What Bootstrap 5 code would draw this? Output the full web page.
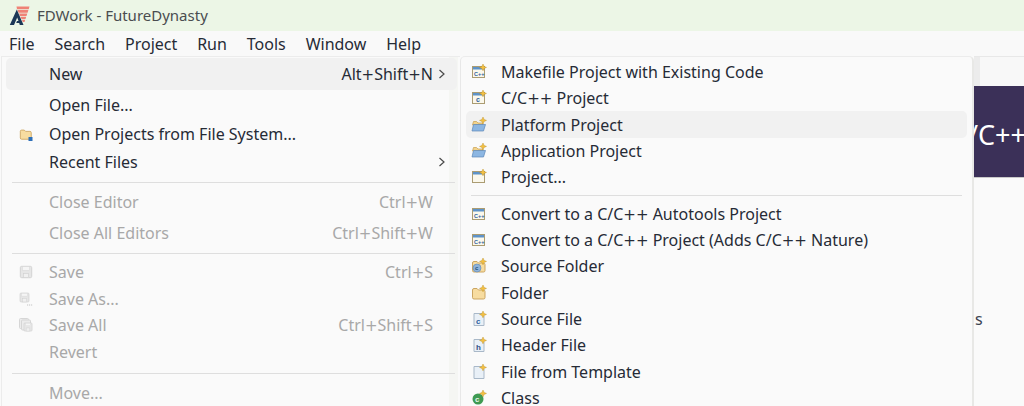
<!DOCTYPE html>
<html lang="en"><head><meta charset="utf-8"><title>FDWork</title>
<link href="https://cdn.jsdelivr.net/npm/bootstrap@5.3.0/dist/css/bootstrap.min.css" rel="stylesheet">
<style>
html,body{width:1024px;height:406px;overflow:hidden;margin:0}
body{background:#fafafa;font-family:"Noto Sans","Open Sans",sans-serif;font-size:16px;color:#262b36}
.titlebar{height:31px;background:#ecf6e6;padding-left:9px;gap:7px;color:#4a4d50;font-size:15px}
.menubar{height:25px;background:#f9f9f9;padding-left:9px;gap:19.900px}
.workspace{height:350px;background:#fafafa}
.menu-a{width:459px;margin-left:1px;background:linear-gradient(to right,#fafafa 447px,#f5f6f3 447px,#f5f6f3 456px,#fafafa 456px);border-left:1px solid #ececec;border-top:1px solid #ececec;flex:none;padding:1px 0 0 4px}
.menu-b{width:514px;flex:none;background:#fafafa;border-left:1px solid #e8e8e8;border-top:1px solid #ececec;border-radius:5px 5px 0 0;padding:0 5px;border-right:2px solid #e8e8e6}
.rest{flex:1;background:#fafafa;min-width:0;overflow:hidden}
.tabstrip{height:30px;background:linear-gradient(to right,#ececec 6px,#f8f8f8 6px);border-top:1px solid #e8e8e8}
.banner{height:92px;background:#3b3058;color:#fff;font-size:27px;line-height:98px;white-space:nowrap;text-indent:-6px;border-bottom:1px solid #c9c9c9;overflow:hidden}
.tail-s{margin-top:131px;padding-left:1px;line-height:20px;color:#3a4250}
.mi{align-items:center;border-radius:5px;white-space:nowrap;flex:none}
.mi .lbl{flex:1}
.a .ic{width:43px;padding-left:13px;flex:none;display:flex}
.a .mi{padding-right:12px;width:451px}
.b .ic{width:35px;padding-left:5px;flex:none;display:flex}
.sc{padding-right:12px}
.sc.flush{padding-right:0}
.arrow{width:12px;flex:none;display:flex}
.pls{font-family:"DejaVu Sans",sans-serif;font-size:15px}
.on{background:#f1f1f1}
.off{color:#a8a8a8}
.sep{height:1px;background:#dedede;flex:none}
.a .sep{margin-left:6px;margin-right:5px}
.b .sep{margin-left:5px;margin-right:5px}
.h25{height:25px}.h26{height:26px}.h27{height:27px}.h28{height:28px}.h30{height:30px}.h32{height:32px}
.gp4{margin-top:4px}.gp5{margin-top:5px}.gp6{margin-top:6px}.gp8{margin-top:8px}
.gb4{margin-bottom:4px}.gb5{margin-bottom:5px}.gb6{margin-bottom:6px}
.first{margin-top:2px}
.tiny{font-family:"Liberation Sans",sans-serif;font-weight:700}
svg{display:block}
</style></head><body>
<svg width="0" height="0" class="position-absolute">
<defs>
<symbol id="win" viewBox="0 0 16 16"><rect x="1.500" y="2.500" width="12" height="11" fill="#fbf8ec" stroke="#ab9c72"/><rect x="2" y="3" width="11" height="2.500" fill="#5f93c8"/></symbol>
<symbol id="spark" viewBox="0 0 16 16"><path d="M12 0l1.100 2.400 2.400 1-2.400 1L12 6.800l-1.100-2.400-2.400-1 2.400-1z" fill="#f3c044" stroke="#b98a1e" stroke-width=".4"/></symbol>
<symbol id="folder" viewBox="0 0 16 16"><path d="M1.500 5q0-1.500 1.500-1.500h3l1.500 1.500h5q1.500 0 1.500 1.500v6q0 1.500-1.500 1.500H3q-1.500 0-1.500-1.500z" fill="#f7dca0" stroke="#cba561"/></symbol>
<symbol id="bfolder" viewBox="0 0 16 16"><path d="M1.500 8l1-3.500h3L7 6h5v2H1.500z" fill="#f3d38a" stroke="#c79d4e" stroke-width=".7"/><path d="M1 14l1.500-6.500h12L12.500 14z" fill="#8cb6e2" stroke="#5b86b8" stroke-width=".7"/></symbol>
<symbol id="save" viewBox="0 0 16 16"><rect x="1.500" y="1.500" width="13" height="13" rx="1.500" fill="#e6e6e6" stroke="#d0d0d0"/><rect x="4" y="2" width="8" height="4" fill="#f5f5f5" stroke="#d8d8d8" stroke-width=".6"/><rect x="5" y="9.500" width="6" height="5" fill="#f0f0f0" stroke="#cfcfcf" stroke-width=".7"/></symbol>
<symbol id="page" viewBox="0 0 16 16"><path d="M3 2.500h7.500l2.500 2.500v9.500H3z" fill="#e9f0f7" stroke="#a9b8c8"/></symbol>
<symbol id="chev" viewBox="0 0 12 12"><path d="M6.500 2l4.500 4-4.500 4" fill="none" stroke="#4a4a4a" stroke-width="1.200"/></symbol>
</defs></svg>

<div class="titlebar d-flex align-items-center">
<svg width="21" height="21" viewBox="0 0 21 21"><path d="M7.500 1.500H20.500L19.700 4.300H8zM8.500 5.100H19.400L18.600 7.700H9.500zM10 8.500H18.300L17.500 11H11zM11.500 11.800H17.200L16.500 14H12.500zM13 14.800H16.200L15.500 17H13.700z" fill="#ef8276"/><path d="M7.800 4.500L.8 20H5L8.200 12.500 9.500 16H8L7.200 18H10.200L10.800 20H14.500z" fill="#1c3756"/></svg>
<span>FDWork - FutureDynasty</span></div>
<div class="menubar d-flex align-items-center"><span>File</span><span>Search</span><span>Project</span><span>Run</span><span>Tools</span><span>Window</span><span>Help</span></div>

<div class="workspace d-flex">
<div class="menu-a a d-flex flex-column">
 <div class="mi on d-flex h32"><span class="ic"></span><span class="lbl">New</span><span class="sc flush">Alt<span class="pls">+</span>Shift<span class="pls">+</span>N</span><span class="arrow"><svg width="12" height="12"><use href="#chev"/></svg></span></div>
 <div class="mi d-flex h30"><span class="ic"></span><span class="lbl">Open File...</span></div>
 <div class="mi d-flex h28"><span class="ic"><svg width="14" height="14" viewBox="0 0 14 14"><use href="#folder" width="14" height="14"/><rect x="9.500" y="10" width="4" height="4" fill="#2d6fb8"/></svg></span><span class="lbl">Open Projects from File System...</span></div>
 <div class="mi d-flex h28"><span class="ic"></span><span class="lbl">Recent Files</span><span class="sc flush"></span><span class="arrow"><svg width="12" height="12"><use href="#chev"/></svg></span></div>
 <div class="sep gp6 gb4"></div>
 <div class="mi off d-flex h30"><span class="ic"></span><span class="lbl">Close Editor</span><span class="sc">Ctrl<span class="pls">+</span>W</span></div>
 <div class="mi off d-flex h32"><span class="ic"></span><span class="lbl">Close All Editors</span><span class="sc">Ctrl<span class="pls">+</span>Shift<span class="pls">+</span>W</span></div>
 <div class="sep gp4 gb4"></div>
 <div class="mi off d-flex h28"><span class="ic"><svg width="14" height="14"><use href="#save" width="14" height="14"/></svg></span><span class="lbl">Save</span><span class="sc">Ctrl<span class="pls">+</span>S</span></div>
 <div class="mi off d-flex h25"><span class="ic"><svg width="14" height="14" viewBox="0 0 14 14"><use href="#save" width="11" height="11"/><path d="M8 13h1.200M10 13h1.200M12 13h1.200" stroke="#c4c4c4"/></svg></span><span class="lbl">Save As...</span></div>
 <div class="mi off d-flex h28"><span class="ic"><svg width="14" height="14" viewBox="0 0 14 14"><rect x=".5" y=".5" width="9" height="10" rx="1" fill="#ececec" stroke="#d6d6d6"/><rect x="2.500" y="2" width="9" height="10" rx="1" fill="#ececec" stroke="#d6d6d6"/><use href="#save" x="4" y="4" width="10" height="10"/></svg></span><span class="lbl">Save All</span><span class="sc">Ctrl<span class="pls">+</span>Shift<span class="pls">+</span>S</span></div>
 <div class="mi off d-flex h26"><span class="ic"></span><span class="lbl">Revert</span></div>
 <div class="sep gp8 gb6"></div>
 <div class="mi off d-flex h26"><span class="ic"></span><span class="lbl">Move...</span></div>
</div>
<div class="menu-b b d-flex flex-column">
 <div class="mi d-flex h26 first"><span class="ic"><svg width="16" height="16"><use href="#win"/><text x="3" y="11.500" font-size="5.500" fill="#2f5f9e" class="tiny">C++</text><use href="#spark"/></svg></span><span class="lbl">Makefile Project with Existing Code</span></div>
 <div class="mi d-flex h26"><span class="ic"><svg width="16" height="16"><use href="#win"/><text x="5" y="12" font-size="7" fill="#2f5f9e" class="tiny">c</text><use href="#spark"/></svg></span><span class="lbl">C/C<span class="pls">+</span><span class="pls">+</span> Project</span></div>
 <div class="mi on d-flex h27"><span class="ic"><svg width="16" height="16"><use href="#bfolder"/><use href="#spark"/></svg></span><span class="lbl">Platform Project</span></div>
 <div class="mi d-flex h26"><span class="ic"><svg width="16" height="16"><use href="#bfolder"/><use href="#spark"/></svg></span><span class="lbl">Application Project</span></div>
 <div class="mi d-flex h26"><span class="ic"><svg width="16" height="16"><use href="#win"/><use href="#spark"/></svg></span><span class="lbl">Project...</span></div>
 <div class="sep gp5 gb5"></div>
 <div class="mi d-flex h26"><span class="ic"><svg width="16" height="16"><use href="#win"/><text x="3" y="11.500" font-size="5.500" fill="#2f5f9e" class="tiny">C++</text></svg></span><span class="lbl">Convert to a C/C<span class="pls">+</span><span class="pls">+</span> Autotools Project</span></div>
 <div class="mi d-flex h26"><span class="ic"><svg width="16" height="16"><use href="#win"/><text x="3" y="11.500" font-size="5.500" fill="#2f5f9e" class="tiny">C++</text></svg></span><span class="lbl">Convert to a C/C<span class="pls">+</span><span class="pls">+</span> Project (Adds C/C<span class="pls">+</span><span class="pls">+</span> Nature)</span></div>
 <div class="mi d-flex h26"><span class="ic"><svg width="16" height="16"><use href="#folder"/><circle cx="6" cy="10" r="4" fill="#8fb3d9" stroke="#5b86b8" stroke-width=".6"/><text x="4" y="12" font-size="6" fill="#23527f" class="tiny">c</text><use href="#spark"/></svg></span><span class="lbl">Source Folder</span></div>
 <div class="mi d-flex h27"><span class="ic"><svg width="16" height="16"><use href="#folder"/><use href="#spark"/></svg></span><span class="lbl">Folder</span></div>
 <div class="mi d-flex h26"><span class="ic"><svg width="16" height="16"><use href="#page"/><text x="5" y="12.500" font-size="8" fill="#2f5f9e" class="tiny">c</text><use href="#spark"/></svg></span><span class="lbl">Source File</span></div>
 <div class="mi d-flex h26"><span class="ic"><svg width="16" height="16"><use href="#page"/><text x="5" y="12.500" font-size="8" fill="#2f4f86" class="tiny">h</text><use href="#spark"/></svg></span><span class="lbl">Header File</span></div>
 <div class="mi d-flex h27"><span class="ic"><svg width="16" height="16"><use href="#page"/><use href="#spark"/></svg></span><span class="lbl">File from Template</span></div>
 <div class="mi d-flex h26"><span class="ic"><svg width="16" height="16" viewBox="0 0 16 16"><circle cx="7" cy="9" r="5.500" fill="#3f9a52"/><text x="4" y="12" font-size="8" fill="#eaf6ea" class="tiny">c</text><use href="#spark"/></svg></span><span class="lbl">Class</span></div>
</div>
<div class="rest">
 <div class="tabstrip"></div>
 <div class="banner">/C++</div>
 <div class="tail-s">s</div>
</div>
</div>
</body></html>
